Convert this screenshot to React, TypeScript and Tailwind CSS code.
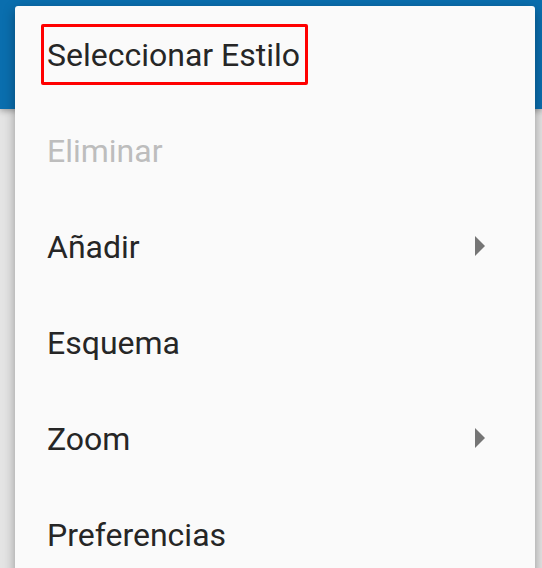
import { ReactNode } from 'react';

type Item = { label: string; disabled?: boolean; submenu?: boolean };

const items: Item[] = [
  { label: 'Seleccionar Estilo' },
  { label: 'Eliminar', disabled: true },
  { label: 'Añadir', submenu: true },
  { label: 'Esquema' },
  { label: 'Zoom', submenu: true },
  { label: 'Preferencias' },
];

function Row({ item, children }: { item: Item; children?: ReactNode }) {
  return (
    <div className="relative flex h-[96px] items-center pl-[32px] pr-[50px] pt-[2px]">
      <span className={item.disabled ? 'text-[#bdbdbd]' : 'text-[#262626]'}>{item.label}</span>
      {item.submenu && (
        <svg className="ml-auto -mt-[2px]" width="10" height="20" viewBox="0 0 10 20">
          <path d="M0 0 L10 10 L0 20 Z" fill="#757575" />
        </svg>
      )}
      {children}
    </div>
  );
}

export default function App() {
  return (
    <div
      className="relative h-[568px] w-[542px] overflow-hidden bg-[#e4e4e4]"
      style={{ fontFamily: 'Roboto, "Noto Sans", sans-serif' }}
    >
      {/* app bar behind the menu */}
      <div className="h-[109px] bg-[#0a6eae] shadow-[0_2px_6px_rgba(0,0,0,0.3)]" />

      {/* popup menu */}
      <div className="absolute left-[15px] top-[6px] w-[520px] rounded-[3px] bg-[#fafafa] text-[32px] shadow-[0_4px_12px_rgba(0,0,0,0.35)]">
        {items.map((item, i) => (
          <Row key={item.label} item={item}>
            {i === 0 && (
              <div className="absolute left-[26px] top-[18px] h-[61px] w-[267px] rounded-[2px] border-[3px] border-[#ff0000]" />
            )}
          </Row>
        ))}
      </div>
    </div>
  );
}
